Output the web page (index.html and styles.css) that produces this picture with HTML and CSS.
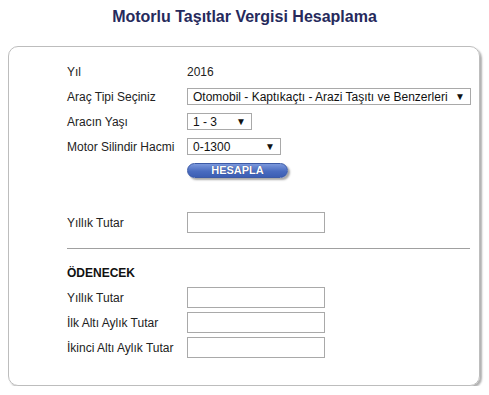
FILE: index.html
```html
<!DOCTYPE html>
<html lang="tr">
<head>
<meta charset="utf-8">
<title>Motorlu Taşıtlar Vergisi Hesaplama</title>
<link rel="stylesheet" href="styles.css">
</head>
<body>
<h1 class="title">Motorlu Taşıtlar Vergisi Hesaplama</h1>
<div class="card">
  <div class="grid">
    <div class="row"><span class="label">Yıl</span><span class="value">2016</span></div>
    <div class="row"><span class="label">Araç Tipi Seçiniz</span><div class="select sel-wide"><span>Otomobil - Kaptıkaçtı - Arazi Taşıtı ve Benzerleri</span><span class="arrow">▼</span></div></div>
    <div class="row"><span class="label">Aracın Yaşı</span><div class="select sel-age"><span>1 - 3</span><span class="arrow">▼</span></div></div>
    <div class="row"><span class="label">Motor Silindir Hacmi</span><div class="select sel-cc"><span>0-1300</span><span class="arrow">▼</span></div></div>
    <div class="btn-row"><button class="btn" type="button">HESAPLA</button></div>
    <div class="row row-in first-out"><span class="label">Yıllık Tutar</span><input class="field" type="text"></div>
  </div>
  <hr class="sep">
  <div class="grid">
    <div class="row"><span class="label bold">ÖDENECEK</span></div>
    <div class="row row-in"><span class="label">Yıllık Tutar</span><input class="field" type="text"></div>
    <div class="row row-in"><span class="label">İlk Altı Aylık Tutar</span><input class="field" type="text"></div>
    <div class="row row-in"><span class="label">İkinci Altı Aylık Tutar</span><input class="field" type="text"></div>
  </div>
</div>
</body>
</html>
```
FILE: styles.css
```css
* { box-sizing: border-box; }
body {
  margin: 0;
  background: #fff;
  font-family: "Liberation Sans", Arial, sans-serif;
  font-size: 12px;
  color: #222;
}
.title {
  margin: 0;
  padding-top: 8px;
  height: 46px;
  text-align: center;
  font-size: 16px;
  font-weight: bold;
  color: #262a5c;
}
.card {
  margin: 0 9px 0 8px;
  height: 340px;
  border: 1px solid #bdbdbd;
  border-radius: 10px;
  box-shadow: 2px 2px 2px #b0b0b0;
  padding: 12px 0 0 58px;
}
.grid {
  display: flex;
  flex-direction: column;
}
.row {
  display: flex;
  align-items: center;
  height: 25px;
}
.label {
  width: 120px;
  flex: none;
}
.bold { font-weight: bold; color: #111; }
.value { color: #222; }
.select {
  display: flex;
  align-items: center;
  justify-content: space-between;
  height: 17px;
  border: 1px solid #a9a9a9;
  padding: 0 5px 0 5px;
  color: #111;
  background: #fff;
}
.arrow { font-size: 10px; color: #111; }
.sel-wide { width: 284px; }
.sel-age { width: 65px; }
.sel-cc { width: 94px; }
.btn-row {
  padding: 4px 0 0 120px;
  height: 28px;
}
.btn {
  width: 101px;
  height: 15px;
  padding: 0;
  border: 1px solid #3c5aa6;
  border-radius: 8px;
  background: linear-gradient(#7b98dc, #4a6cc0 55%, #3c5eb3);
  box-shadow: 2px 2px 2px #a8a8a8;
  color: #fff;
  font-family: "Liberation Sans", Arial, sans-serif;
  font-size: 11px;
  font-weight: bold;
  line-height: 13px;
  text-shadow: 0 0 1px #22346e;
}
.row-in { height: 25px; }
.first-out { margin-top: 23px; }
.field {
  width: 138px;
  height: 21px;
  border: 1px solid #a9a9a9;
  background: #fff;
  margin: 0;
  padding: 0;
}
.sep {
  margin: 13px 9px 11px 0;
  border: 0;
  border-top: 1px solid #a0a0a0;
  height: 0;
}
```
